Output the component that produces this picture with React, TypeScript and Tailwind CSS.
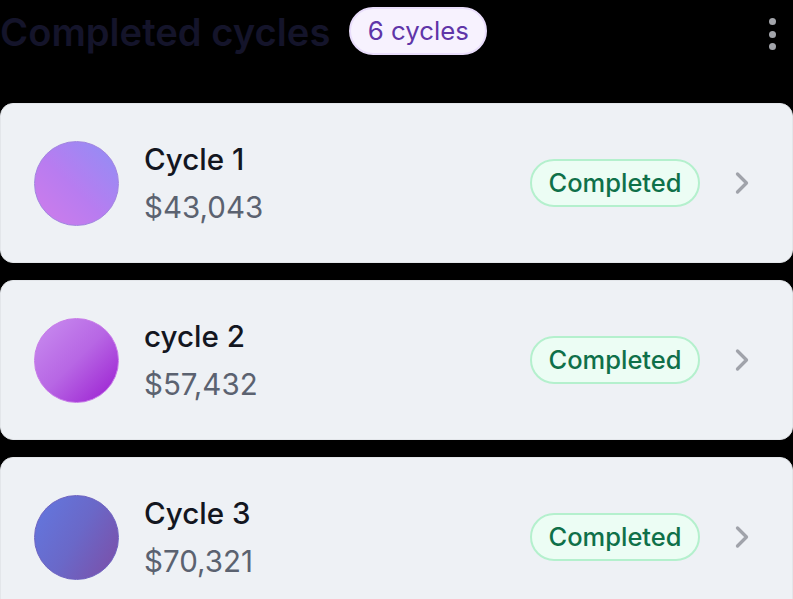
import { ChevronRight } from "lucide-react";

const font = { fontFamily: "Inter, sans-serif" };

const cycles = [
  { name: "Cycle 1", amount: "$43,043", grad: "bg-[linear-gradient(45deg,#d07cea_0%,#b87cf0_45%,#8f8ff5_100%)]", ring: "border-[#a184e0]" },
  { name: "cycle 2", amount: "$57,432", grad: "bg-[linear-gradient(135deg,#c98ef0_0%,#b766e4_50%,#a02ad4_90%)]", ring: "border-[#c77ae8]" },
  { name: "Cycle 3", amount: "$70,321", grad: "bg-[linear-gradient(120deg,#6278e0_0%,#6a68c8_50%,#7d4da6_100%)]", ring: "border-[#6d62c0]" },
];

export default function App() {
  return (
    <div style={font} className="h-[599px] w-[793px] overflow-hidden bg-black">
      <header className="flex h-[55px] items-start pt-[7px]">
        <h1 className="h-[48px] text-[38.2px] font-semibold leading-[50px] text-[#14142a]">Completed cycles</h1>
        <span className="ml-[19px] flex h-[48px] w-[138px] items-center justify-center rounded-full border-2 border-[#e9ddfb] bg-[#f7f2fe] text-[25.8px] text-[#5f35a8]">
          6 cycles
        </span>
        <div className="ml-auto mr-[17px] mt-[11px] flex flex-col gap-[5.5px]">
          <span className="h-[7px] w-[7px] rounded-full bg-[#a3a5ab]" />
          <span className="h-[7px] w-[7px] rounded-full bg-[#a3a5ab]" />
          <span className="h-[7px] w-[7px] rounded-full bg-[#a3a5ab]" />
        </div>
      </header>
      <main className="mt-[48px] flex flex-col gap-[17px]">
        {cycles.map((c) => (
          <div key={c.name} className="flex h-[160px] shrink-0 items-center rounded-[13px] border border-[#e3e6ea] bg-[#eef1f5] pl-[33px] pr-[32px]">
            <div className={`h-[85px] w-[85px] shrink-0 rounded-full border ${c.ring} ${c.grad}`} />
            <div className="ml-[25px] flex flex-col">
              <span className="text-[29.6px] font-[450] leading-[38px] text-[#13161f]">{c.name}</span>
              <span className="mt-[9px] text-[29.5px] font-normal leading-[40px] text-[#5b6270]">{c.amount}</span>
            </div>
            <span className="ml-auto flex h-[48px] w-[170px] items-center justify-center rounded-full border-2 border-[#b4f0cd] bg-[#ecfdf4] text-[25.5px] font-[450] text-[#0f7049]">
              Completed
            </span>
            <ChevronRight className="ml-[24px] h-[36px] w-[36px] text-[#a0a3aa]" strokeWidth={2.2} />
          </div>
        ))}
      </main>
    </div>
  );
}
